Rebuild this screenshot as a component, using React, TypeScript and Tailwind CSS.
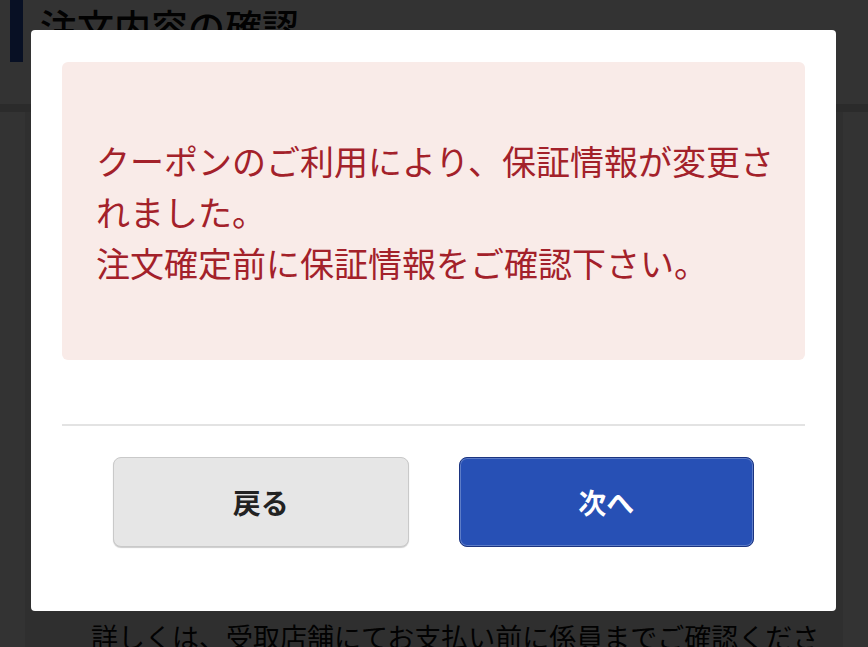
export default function App() {
  return (
    <div className="relative h-[647px] w-[868px] overflow-hidden bg-white font-['Noto_Sans_CJK_JP',sans-serif]">
      {/* Page behind the dialog */}
      <header className="flex h-[104px] items-start bg-white">
        <div className="ml-[10px] h-[62px] w-[13px] bg-[#2850b4]" />
        <h1 className="ml-[17px] mt-[8px] text-[37px] font-medium leading-[37px] text-[#0a0a0a]">
          注文内容の確認
        </h1>
      </header>
      <div className="h-[8px] bg-[#d8d8d8]" />
      <main className="mx-[25px] h-[600px] bg-[#ebebeb] pl-[66px] pt-[505px]">
        <p className="text-[27px] leading-[40px] text-[#0a0a0a]">
          詳しくは、受取店舗にてお支払い前に係員までご確認ください。
        </p>
      </main>

      {/* Overlay + dialog */}
      <div className="absolute inset-0 flex bg-black/80 pl-[31px] pt-[30px]">
        <div className="flex h-[581px] w-[805px] flex-col rounded-[4px] bg-white px-[31px] pt-[32px]">
          <div className="flex h-[298px] items-center rounded-[6px] bg-[#f9ebe8] pl-[34px] pr-[24px]">
            <p className="text-[34px] leading-[51px] text-[#a3212a]">
              クーポンのご利用により、保証情報が変更されました。
              <br />
              注文確定前に保証情報をご確認下さい。
            </p>
          </div>

          <div className="mt-[64px] h-[2px] bg-[#e3e3e3]" />

          <div className="mt-[31px] flex gap-[50px] px-[51px]">
            <button className="flex h-[90px] flex-1 items-center justify-center rounded-[8px] border border-[#c9c9c9] bg-[#e6e6e6] text-[28px] font-bold text-[#222] shadow-[0_1px_1px_rgba(0,0,0,0.2)]">
              戻る
            </button>
            <button className="flex h-[90px] flex-1 items-center justify-center rounded-[8px] border border-[#1b3480] bg-[#2750b5] text-[28px] font-bold text-white shadow-[inset_0_0_0_1px_rgba(255,255,255,0.25)]">
              次へ
            </button>
          </div>
        </div>
      </div>
    </div>
  )
}
